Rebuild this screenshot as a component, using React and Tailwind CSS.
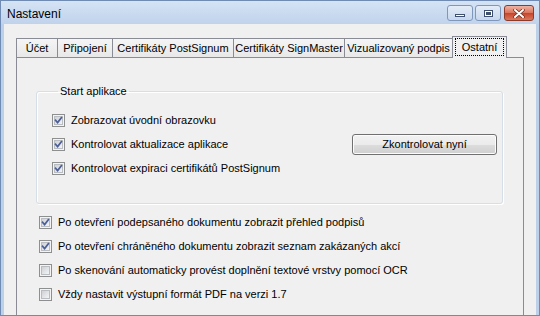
import React from "react";

function Check({ checked }) {
  return (
    <svg width="13" height="13" viewBox="0 0 13 13" className="shrink-0 block">
      <defs>
        <linearGradient id="cbg" x1="0" y1="0" x2="1" y2="1">
          <stop offset="0" stopColor="#cbced3" />
          <stop offset="1" stopColor="#f7f7f7" />
        </linearGradient>
      </defs>
      <rect x="0.5" y="0.5" width="12" height="12" fill="#f4f4f4" stroke="#8e8f8f" />
      <rect x="2.5" y="2.5" width="8" height="8" fill="url(#cbg)" stroke="#b9bcc0" />
      {checked && (
        <path d="M3.6 6.3 L5.6 8.6 L9.4 3.6" fill="none" stroke="#4a5f9a" strokeWidth="1.7" strokeLinecap="square" />
      )}
    </svg>
  );
}

function Row({ checked, children, right }) {
  return (
    <div className="h-[17px] flex items-center">
      <Check checked={checked} />
      <span className="ml-[6px] whitespace-nowrap">{children}</span>
      {right}
    </div>
  );
}

const tabs = [
  ["Účet", "w-[42px]"],
  ["Připojení", "w-[56px]"],
  ["Certifikáty PostSignum", "w-[122px]"],
  ["Certifikáty SignMaster", "w-[112px]"],
  ["Vizualizovaný podpis", "w-[109px]"],
];

export default function App() {
  return (
    <div
      className="w-[540px] h-[316px] overflow-hidden flex flex-col bg-[#bdd0ea] border border-[#6f8bb3] text-[11px] leading-[13px] text-black"
      style={{ fontFamily: '"Liberation Sans", Arial, sans-serif' }}
    >
      {/* Title bar */}
      <div className="h-[23px] shrink-0 flex items-center pl-[6px] pr-[5px] bg-[linear-gradient(to_bottom,#d5e3f4,#c0d3ec)]">
        <span className="text-[12px] leading-[14px] text-black mt-[2px]">Nastavení</span>
        <div className="ml-auto flex items-center gap-[2px] mt-[1px]">
          <div className="w-[26px] h-[16px] rounded-[3px] border border-[#7e97bb] bg-[linear-gradient(to_bottom,#e4ecf7,#c7d7ee)] flex items-end justify-center pb-[3px]">
            <div className="w-[10px] h-[3px] bg-white border border-[#3d4f6d]" />
          </div>
          <div className="w-[26px] h-[16px] rounded-[3px] border border-[#7e97bb] bg-[linear-gradient(to_bottom,#e4ecf7,#c7d7ee)] flex items-center justify-center">
            <div className="w-[9px] h-[7px] border border-[#3d4f6d] bg-white flex items-center justify-center">
              <div className="w-[5px] h-[3px] bg-[#3d4f6d]" />
            </div>
          </div>
          <div className="ml-[1px] w-[30px] h-[16px] rounded-[3px] border border-[#8c3b2b] bg-[linear-gradient(to_bottom,#eeb3a4,#dc7259_50%,#c8432a_51%,#d77a5f)] flex items-center justify-center">
            <svg width="12" height="9" viewBox="0 0 12 9">
              <path d="M2 1 L10 8 M10 1 L2 8" stroke="#6b2a1e" strokeWidth="3.4" strokeLinecap="round" />
              <path d="M2 1 L10 8 M10 1 L2 8" stroke="#ffffff" strokeWidth="2" strokeLinecap="round" />
            </svg>
          </div>
        </div>
      </div>

      {/* Client area */}
      <div className="flex-1 mx-[3px] bg-[#f0f0f0] flex flex-col pl-[12px] pr-[12px] pt-[12px]">
        {/* Tabs */}
        <div className="flex items-end h-[21px] shrink-0 relative z-10">
          {tabs.map(([label, w], i) => (
            <div
              key={label}
              className={`${w} h-[19px] flex items-center justify-center border border-b-0 border-[#898c95] bg-[linear-gradient(to_bottom,#f5f5f5,#e8e8e8)] ${i > 0 ? "-ml-px" : ""}`}
            >
              <span className="whitespace-nowrap mt-[1px]">{label}</span>
            </div>
          ))}
          <div className="w-[55px] -ml-px h-[22px] -mb-px border border-b-0 border-[#898c95] bg-[#f0f0f0] pt-[1px] px-[2px] pb-[2px]">
            <div className="h-full border border-dotted border-black flex items-center justify-center">
              <span className="whitespace-nowrap">Ostatní</span>
            </div>
          </div>
        </div>

        {/* Panel */}
        <div className="flex-1 border border-[#898c95] border-b-0 pl-[19px] pr-[20px] pt-[27px]">
          <fieldset className="border border-[#d5dfe5] rounded-[3px] pl-[15px] pr-[5px] pt-[14px] pb-[26px] shadow-[1px_1px_0_#ffffff,inset_1px_1px_0_#ffffff]">
            <legend className="ml-[6px] px-[2px]">Start aplikace</legend>
            <div className="flex flex-col gap-[7px]">
              <Row checked>Zobrazovat úvodní obrazovku</Row>
              <Row
                checked
                right={
                  <button className="ml-auto w-[145px] h-[21px] shrink-0 rounded-[3px] border border-[#707070] bg-[linear-gradient(to_bottom,#f2f2f2_0%,#ebebeb_50%,#dddddd_50%,#cfcfcf_100%)] shadow-[inset_0_0_0_1px_#fcfcfc] flex items-center justify-center text-[11px]">
                    Zkontrolovat nyní
                  </button>
                }
              >
                Kontrolovat aktualizace aplikace
              </Row>
              <Row checked>Kontrolovat expiraci certifikátů PostSignum</Row>
            </div>
          </fieldset>

          <div className="mt-[10px] pl-[3px] flex flex-col gap-[7px]">
            <Row checked>Po otevření podepsaného dokumentu zobrazit přehled podpisů</Row>
            <Row checked>Po otevření chráněného dokumentu zobrazit seznam zakázaných akcí</Row>
            <Row>Po skenování automaticky provést doplnění textové vrstvy pomocí OCR</Row>
            <Row>Vždy nastavit výstupní formát PDF na verzi 1.7</Row>
          </div>
        </div>
      </div>
    </div>
  );
}
